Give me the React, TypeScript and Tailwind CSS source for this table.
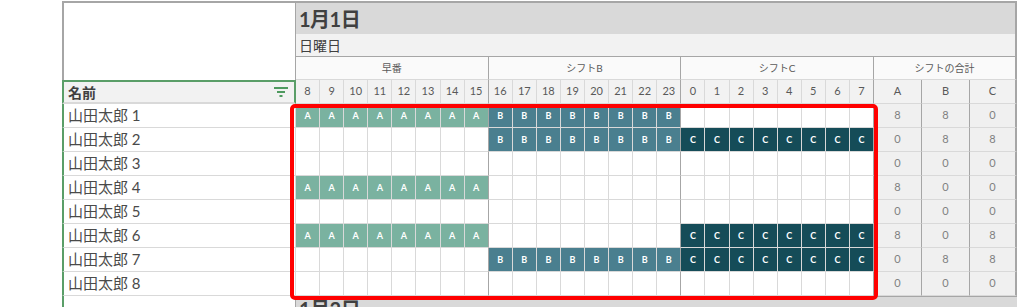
import React from "react";

type Shift = "A" | "B" | "C" | null;

const hours = [8, 9, 10, 11, 12, 13, 14, 15, 16, 17, 18, 19, 20, 21, 22, 23, 0, 1, 2, 3, 4, 5, 6, 7];

// which blocks each person works: [A, B, C]
const people: { name: string; blocks: [boolean, boolean, boolean] }[] = [
  { name: "山田太郎 1", blocks: [true, true, false] },
  { name: "山田太郎 2", blocks: [false, true, true] },
  { name: "山田太郎 3", blocks: [false, false, false] },
  { name: "山田太郎 4", blocks: [true, false, false] },
  { name: "山田太郎 5", blocks: [false, false, false] },
  { name: "山田太郎 6", blocks: [true, false, true] },
  { name: "山田太郎 7", blocks: [false, true, true] },
  { name: "山田太郎 8", blocks: [false, false, false] },
];

const shiftStyle: Record<"A" | "B" | "C", string> = {
  A: "bg-[#7ab2a0]",
  B: "bg-[#4a7f8f]",
  C: "bg-[#154c58]",
};

const FilterIcon = () => (
  <svg width="14" height="10" viewBox="0 0 14 10" className="text-[#4f9a5f]">
    <rect x="0" y="0" width="14" height="2" fill="currentColor" />
    <rect x="3" y="4" width="8" height="2" fill="currentColor" />
    <rect x="5.5" y="8" width="3" height="2" fill="currentColor" />
  </svg>
);

const ShiftCell: React.FC<{ shift: Shift; index: number }> = ({ shift, index }) => {
  const groupEnd = index % 8 === 7;
  return (
    <div
      className={`flex items-center justify-center border-b border-b-[#d9d9d9] border-r ${
        groupEnd ? "border-r-[#a6a6a6]" : "border-r-[#d9d9d9]"
      } ${shift ? shiftStyle[shift] : "bg-white"}`}
    >
      {shift && <span className="text-[9px] font-bold text-white leading-none">{shift}</span>}
    </div>
  );
};

export default function App() {
  return (
    <div className="h-[307px] overflow-hidden bg-white font-['Lato','Noto_Sans_CJK_JP',sans-serif] text-[#404040]">
      <div className="relative ml-[62px] mt-px w-[955px] border-t-2 border-[#a6a6a6]">
        <div className="grid grid-cols-[234px_repeat(24,minmax(0,1fr))_48px_48px_47px] grid-rows-[31px_23px_23px_24px_repeat(8,24px)_40px]">
          {/* top-left blank */}
          <div className="row-span-3 border-l-2 border-r border-l-[#a6a6a6] border-r-[#a6a6a6] bg-white" />

          {/* date */}
          <div className="col-span-27 flex items-center bg-[#d9d9d9] pl-[3px] border-r-2 border-r-[#a6a6a6]">
            <span className="text-[20px] font-bold tracking-tight leading-none">1月1日</span>
          </div>
          <div className="col-span-27 flex items-center bg-[#f2f2f2] pl-[3px] border-b border-b-[#a6a6a6] border-r-2 border-r-[#a6a6a6]">
            <span className="text-[14px]">日曜日</span>
          </div>

          {/* shift group headers */}
          {["早番", "シフトB", "シフトC"].map((label) => (
            <div
              key={label}
              className="col-span-8 flex items-center justify-center bg-[#fafafa] border-r border-r-[#a6a6a6] border-b border-b-[#d9d9d9] text-[10px] text-[#595959]"
            >
              {label}
            </div>
          ))}
          <div className="col-span-3 flex items-center justify-center bg-[#fafafa] border-r-2 border-r-[#a6a6a6] border-b border-b-[#d9d9d9] text-[10px] text-[#595959]">
            シフトの合計
          </div>

          {/* column header row */}
          <div className="flex items-center justify-between bg-[#f2f2f2] border-2 border-[#5a9e68] border-b-[#d9d9d9] pl-[4px] pr-[6px]">
            <span className="text-[14px] font-bold">名前</span>
            <FilterIcon />
          </div>
          {hours.map((h, i) => (
            <div
              key={`h${i}`}
              className={`flex items-center justify-center bg-[#f2f2f2] border-b border-b-[#d9d9d9] border-r ${
                i % 8 === 7 ? "border-r-[#a6a6a6]" : "border-r-[#d9d9d9]"
              } text-[11px] text-[#595959]`}
            >
              {h}
            </div>
          ))}
          {["A", "B", "C"].map((s, i) => (
            <div
              key={`s${s}`}
              className={`flex items-center justify-center bg-[#f2f2f2] border-b border-b-[#d9d9d9] border-r-[#a6a6a6] ${
                i === 2 ? "border-r-2" : "border-r"
              } text-[11px] text-[#595959]`}
            >
              {s}
            </div>
          ))}

          {/* people rows */}
          {people.map((p) => {
            const cells: Shift[] = hours.map((_, i) => {
              const g = Math.floor(i / 8);
              return p.blocks[g] ? (["A", "B", "C"][g] as Shift) : null;
            });
            const totals = p.blocks.map((b) => (b ? 8 : 0));
            return (
              <React.Fragment key={p.name}>
                <div className="flex items-center bg-white border-l-2 border-l-[#5a9e68] border-b border-b-[#d9d9d9] border-r border-r-[#d9d9d9] pl-[4px] text-[15px] text-[#4a4a4a]">
                  {p.name}
                </div>
                {cells.map((c, i) => (
                  <ShiftCell key={i} shift={c} index={i} />
                ))}
                {totals.map((t, i) => (
                  <div
                    key={`t${i}`}
                    className={`flex items-center justify-center bg-[#f0f0f0] border-b border-b-[#d9d9d9] border-r-[#a6a6a6] ${
                      i === 2 ? "border-r-2" : "border-r"
                    } text-[11px] text-[#808080]`}
                  >
                    {t}
                  </div>
                ))}
              </React.Fragment>
            );
          })}

          {/* next day (cut off) */}
          <div className="bg-white border-l-2 border-l-[#5a9e68] border-r border-r-[#a6a6a6]" />
          <div className="col-span-27 flex items-start bg-[#d9d9d9] pl-[3px] pt-[2px] border-t border-t-[#a6a6a6]">
            <span className="text-[20px] font-bold tracking-tight leading-none">1月2日</span>
          </div>
        </div>

        {/* highlight box */}
        <div className="pointer-events-none absolute left-[228px] top-[101px] h-[196px] w-[588px] rounded-[5px] border-[4px] border-[#ff0000]" />
      </div>
    </div>
  );
}
